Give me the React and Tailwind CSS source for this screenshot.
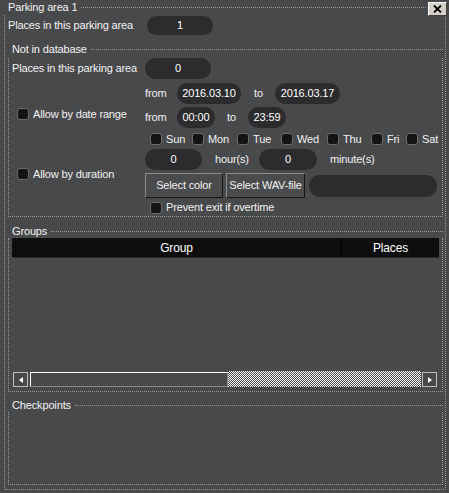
import React from 'react'

const font = { fontFamily: '"Liberation Sans", Arial, sans-serif' }

const Pill = ({ children, className = '' }) => (
  <div className={`flex items-center justify-center rounded-full bg-[#2c2c2e] text-white ${className}`}>
    {children}
  </div>
)

const Check = ({ label, className = '' }) => (
  <div className={`flex items-center ${className}`}>
    <span className="w-[12px] h-[12px] rounded-[3px] bg-[#141414] border border-[#6c6c6c] shrink-0" />
    {label && <span className="ml-[4px] whitespace-nowrap">{label}</span>}
  </div>
)

const Button = ({ children, className = '' }) => (
  <div
    className={`flex items-center justify-center bg-[#4a4b4d] border border-t-[#8c8c8c] border-l-[#8c8c8c] border-b-[#161616] border-r-[#161616] whitespace-nowrap ${className}`}
  >
    {children}
  </div>
)

const GroupHeader = ({ title, className = '' }) => (
  <div className={`flex items-center h-[14px] ${className}`}>
    <span className="pl-[4px] whitespace-nowrap leading-none">{title}</span>
    <div className="flex-1 ml-[4px] border-t border-dotted border-[#9a9a9a]" />
  </div>
)

const days = [
  ['Sun', 'w-[42px]'],
  ['Mon', 'w-[45px]'],
  ['Tue', 'w-[44px]'],
  ['Wed', 'w-[46px]'],
  ['Thu', 'w-[44px]'],
  ['Fri', 'w-[35px]'],
  ['Sat', 'w-[40px]'],
]

export default function App() {
  return (
    <div className="w-[449px] h-[493px] bg-[#48494b] text-[#f2f2f2] text-[11px] tracking-[-0.15px] relative overflow-hidden" style={font}>
      {/* close button */}
      <div className="absolute top-[2px] right-[2px] w-[19px] h-[14px] bg-[#d4d0c8] border border-t-[#ffffff] border-l-[#ffffff] border-b-[#404040] border-r-[#404040] flex items-center justify-center">
        <svg width="9" height="8" viewBox="0 0 9 8">
          <path d="M1 0.5 L8 7.5 M8 0.5 L1 7.5" stroke="#000" strokeWidth="1.8" />
        </svg>
      </div>

      <div className="ml-[4px] w-[442px]">
        {/* outer header */}
        <div className="flex items-center h-[15px] mr-[20px]">
          <span className="pl-[4px] whitespace-nowrap leading-none">Parking area 1</span>
          <div className="flex-1 ml-[4px] border-t border-dotted border-[#9a9a9a]" />
        </div>

        {/* outer body */}
        <div className="h-[475px] border-l border-r border-b border-dotted border-[#9a9a9a] flex flex-col">
          <div className="flex items-center h-[19px] mt-[1px] pl-[3px]">
            <span className="w-[139px] whitespace-nowrap">Places in this parking area</span>
            <Pill className="w-[66px] h-[19px]">1</Pill>
          </div>

          {/* Not in database */}
          <div className="mt-[7px] ml-[3px] mr-[2px]">
            <GroupHeader title="Not in database" />
            <div className="border-l border-r border-b border-dotted border-[#9a9a9a] pl-[3px] pb-[2px]">
              <div className="flex items-center h-[21px] mt-[2px]">
                <span className="w-[133px] whitespace-nowrap">Places in this parking area</span>
                <Pill className="w-[66px] h-[21px]">0</Pill>
              </div>

              <div className="flex mt-[4px]">
                <div className="w-[133px] shrink-0">
                  <Check label="Allow by date range" className="h-[14px] mt-[24px] pl-[5px]" />
                  <Check label="Allow by duration" className="h-[14px] mt-[46px] pl-[5px]" />
                </div>

                <div className="flex flex-col">
                  <div className="flex items-center h-[21px]">
                    <span className="w-[32px]">from</span>
                    <Pill className="w-[64px] h-[21px]">2016.03.10</Pill>
                    <span className="w-[34px] pl-[13px]">to</span>
                    <Pill className="w-[65px] h-[21px]">2016.03.17</Pill>
                  </div>
                  <div className="flex items-center h-[21px] mt-[3px]">
                    <span className="w-[32px]">from</span>
                    <Pill className="w-[38px] h-[21px]">00:00</Pill>
                    <span className="w-[33px] pl-[12px]">to</span>
                    <Pill className="w-[38px] h-[21px]">23:59</Pill>
                  </div>
                  <div className="flex items-center h-[14px] mt-[4px] pl-[5px]">
                    {days.map(([d, w]) => (
                      <Check key={d} label={d} className={w} />
                    ))}
                  </div>
                  <div className="flex items-center h-[21px] mt-[3px]">
                    <Pill className="w-[57px] h-[21px]">0</Pill>
                    <span className="w-[57px] pl-[13px]">hour(s)</span>
                    <Pill className="w-[58px] h-[21px]">0</Pill>
                    <span className="pl-[13px]">minute(s)</span>
                  </div>
                  <div className="flex items-center h-[25px] mt-[3px]">
                    <Button className="w-[78px] h-[25px]">Select color</Button>
                    <Button className="w-[79px] h-[25px] ml-[3px]">Select WAV-file</Button>
                    <Pill className="w-[128px] h-[22px] ml-[4px]" />
                  </div>
                  <Check label="Prevent exit if overtime" className="h-[13px] mt-[3px] pl-[5px]" />
                </div>
              </div>
            </div>
          </div>

          {/* Groups */}
          <div className="mt-[7px] ml-[3px] mr-[2px]">
            <GroupHeader title="Groups" />
            <div className="h-[154px] border-l border-r border-b border-dotted border-[#9a9a9a] px-[3px] pb-[4px] flex flex-col">
              <div className="flex h-[20px] bg-[#0e0e0e] text-[12px] text-white border-b border-[#2a2a2a]">
                <div className="w-[330px] flex items-center justify-center border-r border-[#000000]">Group</div>
                <div className="flex-1 flex items-center justify-center">Places</div>
              </div>
              <div className="flex-1" />
              <div className="flex h-[15px] ml-[1px]">
                <div className="w-[15px] h-[15px] border border-[#bdbdbd] flex items-center justify-center">
                  <svg width="4" height="6" viewBox="0 0 4 6">
                    <path d="M4 0 L0 3 L4 6 Z" fill="#ffffff" />
                  </svg>
                </div>
                <div className="w-[198px] h-[15px] ml-[2px] border border-t-[#ffffff] border-l-[#ffffff] border-b-[#8a8a8a] border-r-[#8a8a8a]" />
                <div className="w-[193px] h-[16px] -mt-[1px] bg-[repeating-conic-gradient(#ffffff_0%_25%,#48494b_0%_50%)] bg-[length:2px_2px]" />
                <div className="w-[15px] h-[15px] ml-[1px] border border-[#bdbdbd] flex items-center justify-center">
                  <svg width="4" height="6" viewBox="0 0 4 6">
                    <path d="M0 0 L4 3 L0 6 Z" fill="#ffffff" />
                  </svg>
                </div>
              </div>
            </div>
          </div>

          {/* Checkpoints */}
          <div className="mt-[6px] ml-[3px] mr-[2px]">
            <GroupHeader title="Checkpoints" />
            <div className="h-[73px] border-l border-r border-b border-dotted border-[#9a9a9a]" />
          </div>
        </div>
      </div>
    </div>
  )
}
